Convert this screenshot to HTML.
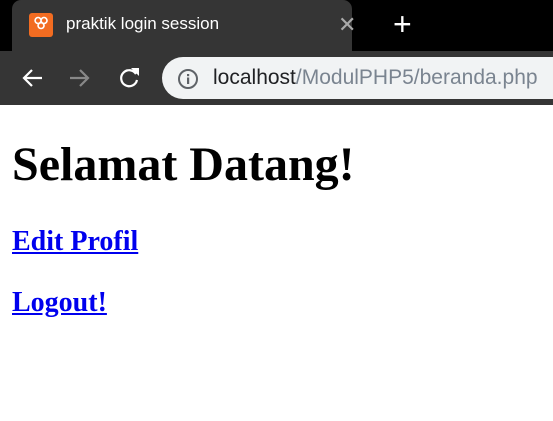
<!DOCTYPE html>
<html><head><style>
*{box-sizing:border-box}
body{margin:0;width:553px;height:421px;overflow:hidden;background:#fff;font-family:"Liberation Serif",serif}
.top{position:absolute;left:0;top:0;width:553px;height:51px;background:#000}
.tab{position:absolute;left:12px;top:0;width:340px;height:51px;background:#353535;border-radius:9px 9px 0 0}
.fav{position:absolute;left:17px;top:13px;width:24px;height:24px;background:#f26c21;border-radius:3px;color:#fff;font:bold 16px "Liberation Sans",sans-serif;text-align:center;line-height:24px}
.title{position:absolute;left:54px;top:14px;color:#fff;font:17px "Liberation Sans",sans-serif}
.x{position:absolute;left:326px;top:12px;color:#aaa;font:22px "Liberation Sans",sans-serif}
.plus{position:absolute;left:393px;top:6px;color:#fff;font:32px "Liberation Sans",sans-serif}
.bar{position:absolute;left:0;top:51px;width:553px;height:54px;background:#353535}
.omni{position:absolute;left:162px;top:57px;width:420px;height:42px;background:#f1f3f4;border-radius:21px}
.url{position:absolute;left:213px;top:66px;font:21px "Liberation Sans",sans-serif;color:#202124}
.url span{color:#7a8490}
.content{position:absolute;left:12px;top:0;width:540px}
h1{font-size:48px;margin:0;position:absolute;top:137px;white-space:nowrap}
h3{font-size:28px;margin:0;position:absolute;white-space:nowrap}
a{color:#0000ee;text-decoration:underline}
</style></head><body>
<div class="top"></div>
<div class="tab"><div class="fav">ꕢ</div><div class="title">praktik login session</div><div class="x">✕</div></div>
<div class="plus">+</div>
<div class="bar"></div>
<svg style="position:absolute;left:0;top:51px" width="160" height="54">
<g fill="none" stroke-width="2.2">
<path d="M42 27H24M32 19l-8 8 8 8" stroke="#fff"/>
<path d="M70 27h18M80 19l8 8-8 8" stroke="#888"/>
<path d="M136 23a8 8 0 1 0 1 6" stroke="#fff"/>
</g>
<path d="M131 17h8v8z" fill="#fff"/>
</svg>
<div class="omni"></div>
<svg style="position:absolute;left:177px;top:68px" width="22" height="22"><circle cx="11" cy="11" r="9" fill="none" stroke="#5f6368" stroke-width="2"/><rect x="10" y="9.5" width="2.2" height="6.5" fill="#5f6368"/><rect x="10" y="6" width="2.2" height="2.2" fill="#5f6368"/></svg>
<div class="url">localhost<span>/ModulPHP5/beranda.php</span></div>
<div class="content">
<h1>Selamat Datang!</h1>
<h3 style="top:226px"><a>Edit Profil</a></h3>
<h3 style="top:287px"><a>Logout!</a></h3>
</div>
</body></html>
